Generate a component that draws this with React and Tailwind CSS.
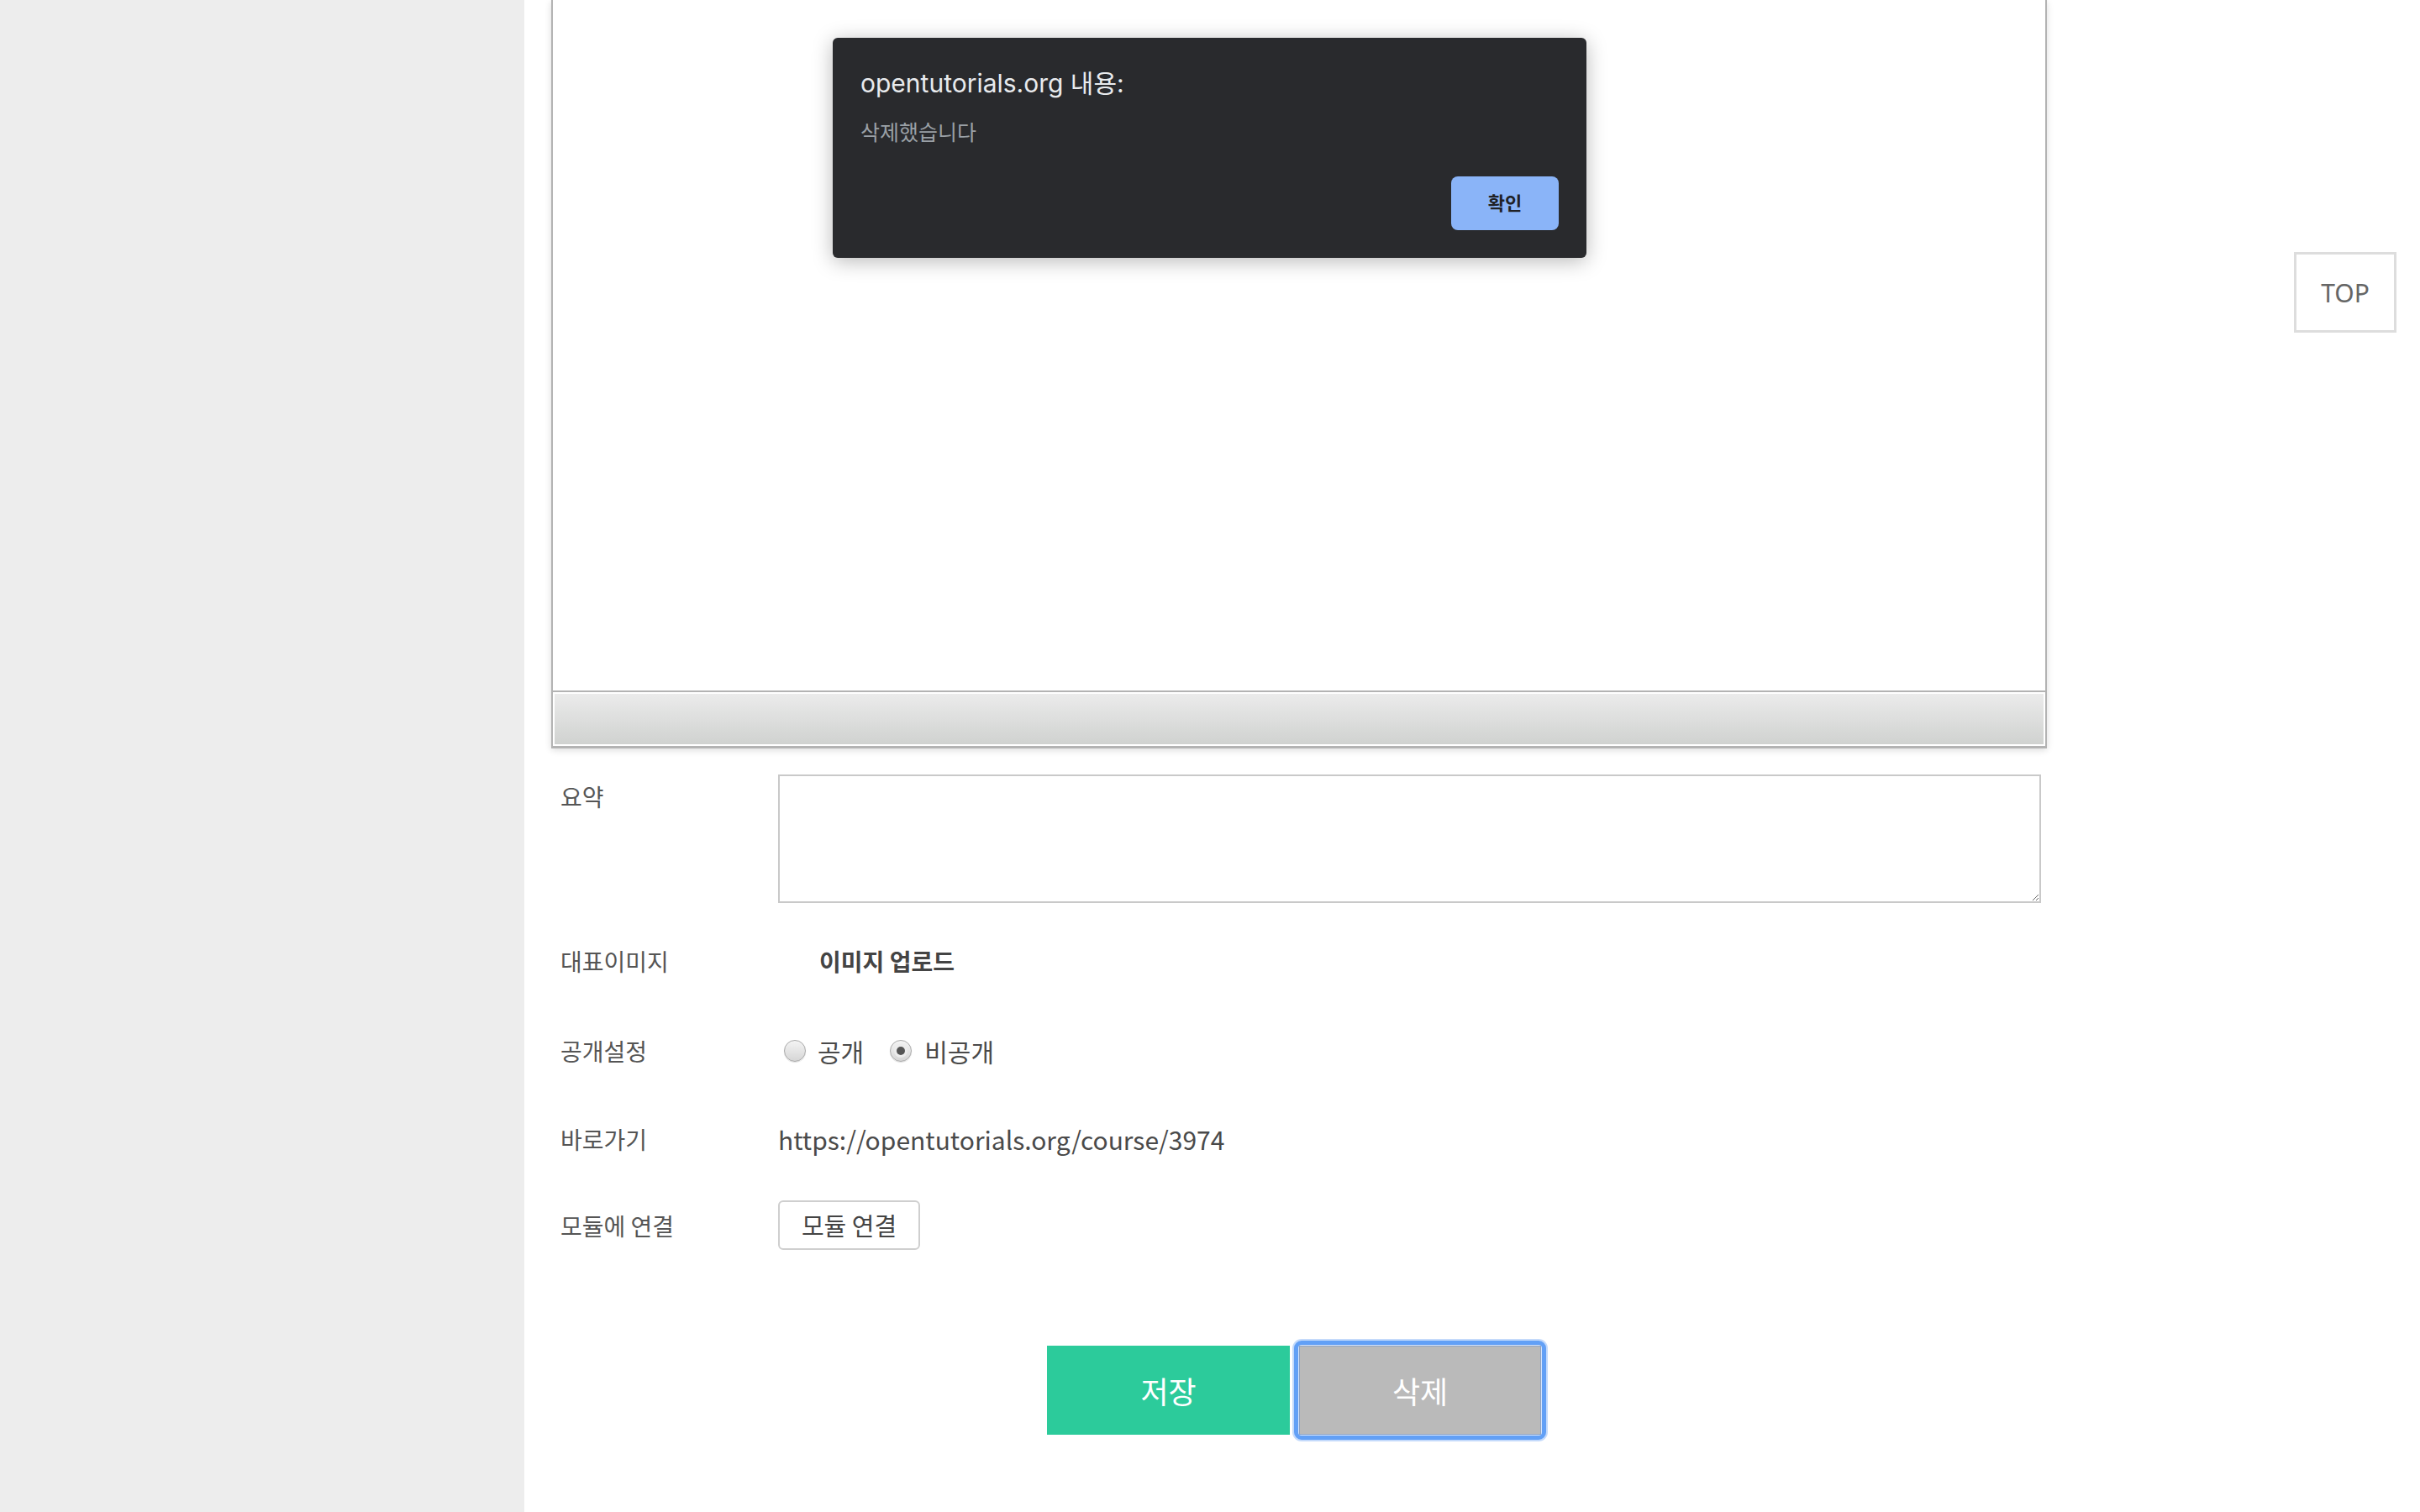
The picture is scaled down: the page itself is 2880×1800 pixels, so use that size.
const labelCls = "w-[259px] shrink-0 text-[28px] leading-[36px] text-[#555]";

function Radio({ checked }) {
  return (
    <span className="relative flex h-[26px] w-[26px] shrink-0 items-center justify-center rounded-full border border-[#a9a9a9] bg-linear-to-b from-[#f4f4f4] to-[#d6d6d6] shadow-[0_1px_1px_rgba(0,0,0,0.12)]">
      {checked && (
        <span className="flex h-[16px] w-[16px] items-center justify-center rounded-full bg-[#ececec]">
          <span className="h-[10px] w-[10px] rounded-full bg-[#555]" />
        </span>
      )}
    </span>
  );
}

function Editor() {
  return (
    <div className="border-x-2 border-b-[3px] border-[#b3b3b3] bg-white shadow-[0_2px_8px_rgba(0,0,0,0.14)]">
      <div className="h-[822px]" />
      <div className="border-t-2 border-[#b3b3b3] bg-white p-[2px]">
        <div className="h-[60px] bg-linear-to-b from-[#ebebeb] to-[#d0d2d0]" />
      </div>
    </div>
  );
}

function AlertDialog() {
  return (
    <div className="absolute left-[991px] top-[45px] flex h-[262px] w-[897px] flex-col rounded-[6px] bg-[#292a2d] px-[33px] pt-[36px] shadow-[0_4px_24px_rgba(0,0,0,0.28)] font-['Inter','Noto_Sans_CJK_KR',sans-serif]">
      <p className="text-[30px] leading-[36px] text-[#e8eaed]">opentutorials.org 내용:</p>
      <p className="mt-[25px] text-[25px] leading-[32px] text-[#9aa0a6]">삭제했습니다</p>
      <div className="mt-[36px] flex justify-end">
        <button className="h-[64px] w-[128px] rounded-[8px] bg-[#8ab4f8] text-[22px] font-semibold text-[#202124]">
          확인
        </button>
      </div>
    </div>
  );
}

export default function App() {
  return (
    <div className="relative flex min-h-screen w-full overflow-hidden bg-white font-['Noto_Sans_CJK_KR','Noto_Sans',sans-serif]">
      <aside className="w-[624px] shrink-0 bg-[#ededed]" />

      <main className="flex-1 pl-[32px]">
        <div className="w-[1780px]">
          <Editor />

          <div className="pl-[11px]">
            {/* 요약 */}
            <div className="mt-[31px] flex">
              <span className={`${labelCls} pt-[8px]`}>요약</span>
              <textarea className="h-[153px] w-[1503px] border-2 border-[#c9c9c9] bg-white outline-none" />
            </div>

            {/* 대표이미지 */}
            <div className="mt-[39px] flex h-[60px] items-center">
              <span className={labelCls}>대표이미지</span>
              <span className="ml-[49px] text-[28px] font-bold leading-[36px] text-[#444]">이미지 업로드</span>
            </div>

            {/* 공개설정 */}
            <div className="mt-[47px] flex h-[60px] items-center">
              <span className={labelCls}>공개설정</span>
              <label className="ml-[7px] flex items-center gap-[14px] text-[30px] leading-[36px] text-[#4a4a4a]">
                <Radio /> 공개
              </label>
              <label className="ml-[31px] flex items-center gap-[15px] text-[30px] leading-[36px] text-[#4a4a4a]">
                <Radio checked /> 비공개
              </label>
            </div>

            {/* 바로가기 */}
            <div className="mt-[45px] flex h-[60px] items-center">
              <span className={labelCls}>바로가기</span>
              <span className="text-[30px] leading-[36px] text-[#4a4a4a]">https://opentutorials.org/course/3974</span>
            </div>

            {/* 모듈에 연결 */}
            <div className="mt-[43px] flex h-[59px] items-center">
              <span className={labelCls}>모듈에 연결</span>
              <button className="h-[59px] w-[169px] rounded-[6px] border-2 border-[#cfcfcf] bg-white text-[29px] text-[#444]">
                모듈 연결
              </button>
            </div>
          </div>

          <div className="mt-[108px] flex items-center justify-center gap-[5px] pr-[6px]">
            <button className="h-[106px] w-[289px] bg-[#2ccb9b] text-[36px] text-white">저장</button>
            <div className="rounded-[9px] border-[5px] border-[#62a0f6] bg-[#d5e4fb] p-[1px] shadow-[0_0_0_2px_#c4dafb]">
              <button className="block h-[106px] w-[288px] border border-[#8ea3c2] bg-[#bababa] text-[36px] text-white">
                삭제
              </button>
            </div>
          </div>
        </div>
      </main>

      <button className="absolute right-[28px] top-[300px] flex h-[96px] w-[122px] items-center justify-center border-[3px] border-[#dddddd] bg-white font-['Noto_Sans',sans-serif] text-[30px] text-[#666]">
        TOP
      </button>

      <AlertDialog />
    </div>
  );
}
